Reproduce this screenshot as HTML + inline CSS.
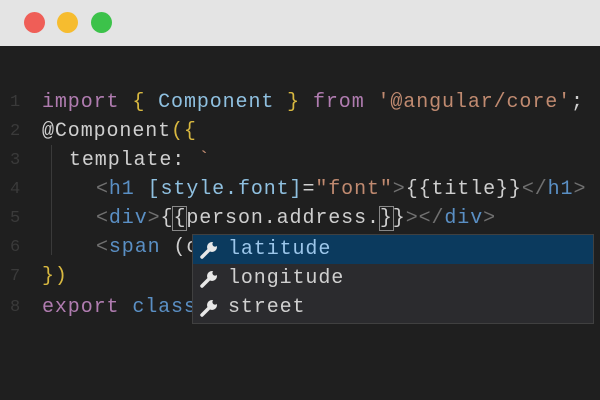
<!DOCTYPE html>
<html><head><style>
body{margin:0;width:600px;height:400px;overflow:hidden;background:#1e1e1e;font-family:"Liberation Mono",monospace;}
.bar{position:absolute;left:0;top:0;width:600px;height:46px;background:#e4e4e4;}
.dot{position:absolute;top:12px;width:21px;height:21px;border-radius:50%;}
.ed{position:absolute;left:0;top:46px;width:600px;height:354px;background:#1f1f1f;}
.ln{position:absolute;left:0;font-size:20px;letter-spacing:0.9px;line-height:29px;white-space:pre;color:#cfcfcf;}
.n{position:absolute;left:10px;color:#3a3a3a;font-size:17px;line-height:29px;}
.k{color:#b07cb0}.s{color:#c08a70}.y{color:#d8b840}.b{color:#5a8fc4}.g{color:#707070}.a{color:#8fc0e0}
.pop{position:absolute;left:192px;top:234px;width:400px;height:88px;background:#2b2b2e;border:1px solid #404040;}
.row{height:29px;line-height:29px;font-size:20px;letter-spacing:0.9px;color:#d0d0d0;padding-left:35px;position:relative}
.row.sel{background:#0b3a5e;color:#9cc6ea}
.row svg{position:absolute;left:6px;top:5px}
.guide{position:absolute;left:51px;top:145px;width:1px;height:110px;background:#3a3a3a}
</style></head><body>
<div class="bar">
<div class="dot" style="left:24px;background:#ef5e57"></div>
<div class="dot" style="left:57px;background:#f6bc2f"></div>
<div class="dot" style="left:91px;background:#3cc24a"></div>
</div>
<div class="ed"></div>
<div class="guide"></div>
<div class="n" style="top:88px">1</div><div class="n" style="top:117px">2</div><div class="n" style="top:146px">3</div><div class="n" style="top:175px">4</div><div class="n" style="top:204px">5</div><div class="n" style="top:233px">6</div><div class="n" style="top:262px">7</div><div class="n" style="top:293px">8</div>
<div class="ln" style="left:42px;top:88px"><span class="k">import</span> <span class="y">{</span> <span class="a">Component</span> <span class="y">}</span> <span class="k">from</span> <span class="s">'@angular/core'</span>;</div>
<div class="ln" style="left:42px;top:117px">@Component<span class="y">({</span></div>
<div class="ln" style="left:69px;top:146px">template: <span class="s">`</span></div>
<div class="ln" style="left:96px;top:175px"><span class="g">&lt;</span><span class="b">h1</span> <span class="a">[style.font]</span>=<span class="s">"font"</span><span class="g">&gt;</span>{{title}}<span class="g">&lt;/</span><span class="b">h1</span><span class="g">&gt;</span></div>
<div class="ln" style="left:96px;top:204px"><span class="g">&lt;</span><span class="b">div</span><span class="g">&gt;</span>{<span style="outline:1px solid #888">{</span>person.address.<span style="outline:1px solid #888">}</span>}<span class="g">&gt;&lt;/</span><span class="b">div</span><span class="g">&gt;</span></div>
<div class="ln" style="left:96px;top:233px"><span class="g">&lt;</span><span class="b">span</span> (c</div>
<div class="ln" style="left:42px;top:262px"><span class="y">})</span></div>
<div class="ln" style="left:42px;top:293px"><span class="k">export</span> <span class="b">class</span></div>
<div class="pop">
<div class="row sel"><svg width="20" height="20" viewBox="0 0 20 20"><line x1="3" y1="17" x2="11" y2="9" stroke="#e8e8e8" stroke-width="3.5" stroke-linecap="round"/><circle cx="13" cy="7" r="5" fill="#e8e8e8"/><circle cx="16" cy="4" r="2.6" fill="#0b3a5e"/></svg>latitude</div>
<div class="row"><svg width="20" height="20" viewBox="0 0 20 20"><line x1="3" y1="17" x2="11" y2="9" stroke="#e8e8e8" stroke-width="3.5" stroke-linecap="round"/><circle cx="13" cy="7" r="5" fill="#e8e8e8"/><circle cx="16" cy="4" r="2.6" fill="#2b2b2e"/></svg>longitude</div>
<div class="row"><svg width="20" height="20" viewBox="0 0 20 20"><line x1="3" y1="17" x2="11" y2="9" stroke="#e8e8e8" stroke-width="3.5" stroke-linecap="round"/><circle cx="13" cy="7" r="5" fill="#e8e8e8"/><circle cx="16" cy="4" r="2.6" fill="#2b2b2e"/></svg>street</div>
</div>
</body></html>
